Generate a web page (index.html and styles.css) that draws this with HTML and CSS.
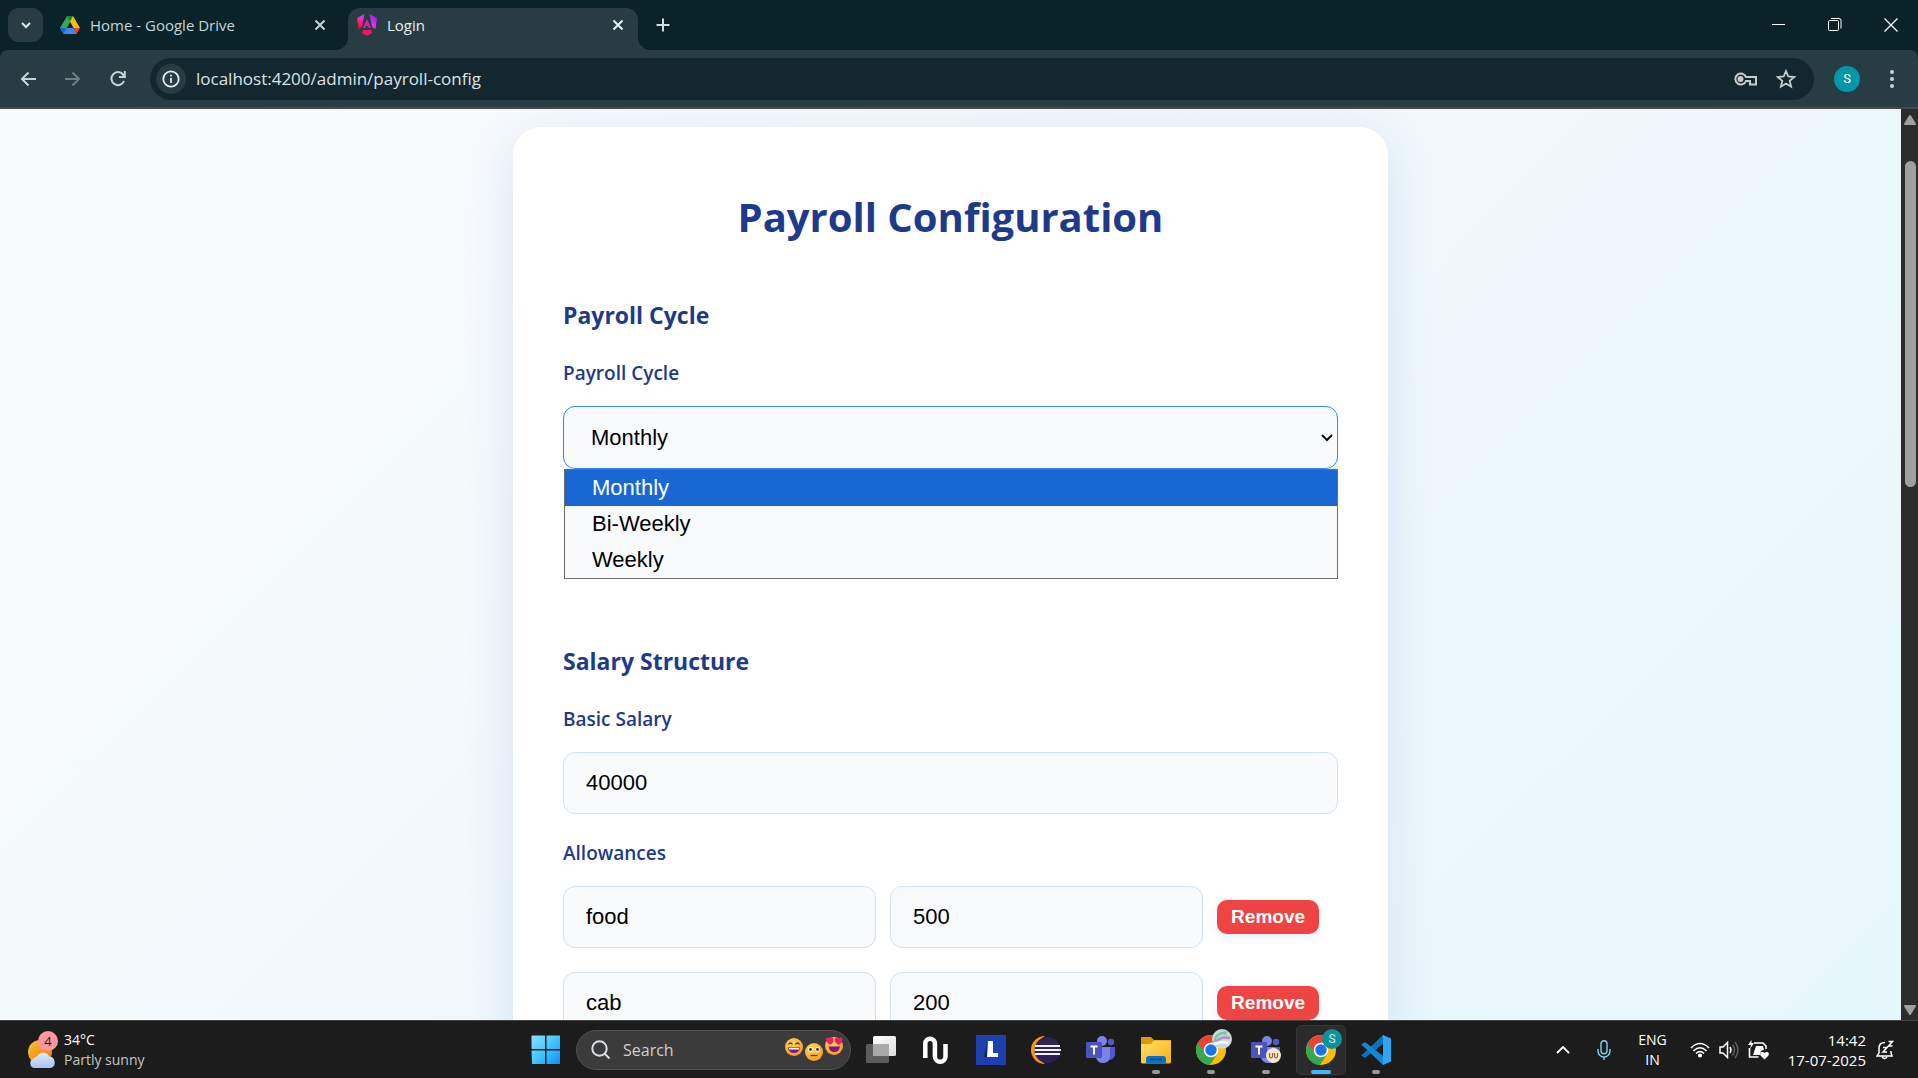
FILE: index.html
```html
<!DOCTYPE html>
<html lang="en">
<head>
<meta charset="utf-8">
<meta name="viewport" content="width=device-width, initial-scale=1">
<title>Login</title>
<link rel="stylesheet" href="styles.css">
</head>
<body>
<header class="browser">
  <div class="tabstrip">
    <button class="tab-search" aria-label="Search tabs"><svg width="14" height="14" viewBox="0 0 14 14"><path d="M3 5l4 4 4-4" fill="none" stroke="#dfe9eb" stroke-width="2"/></svg></button>
    <div class="tab">
      <svg class="favicon" width="20" height="18" viewBox="0 0 20 18"><path d="M7 0L0 12l3.500 6 6.800-12z" fill="#34a853"/><path d="M7 0h6l7 12h-6.500z" fill="#fbbc04"/><path d="M7 0h6L10 5.500z" fill="#188038"/><path d="M0 12h6.800L3.500 18z" fill="#1967d2"/><path d="M6.800 12h6.500l3.200 6h-13z" fill="#4285f4"/><path d="M13.300 12H20l-3.500 6z" fill="#ea4335"/></svg>
      <span class="tab-title">Home - Google Drive</span>
      <button class="plain tab-close" aria-label="Close tab"><svg width="12" height="12" viewBox="0 0 12 12"><path d="M1.500 1.500l9 9M10.500 1.500l-9 9" stroke="#c3d2d5" stroke-width="2"/></svg></button>
    </div>
    <div class="tab active">
      <svg class="favicon" width="20" height="22" viewBox="0 0 20 22"><defs><linearGradient id="ng" x1="0" y1="1" x2="1" y2="0"><stop offset="0" stop-color="#f0060b"/><stop offset=".5" stop-color="#e935d6"/><stop offset="1" stop-color="#7a1cff"/></linearGradient></defs><path d="M7.500 0L5 13 1.500 15 0 4zM12.500 0L15 13l3.500 2L20 4z" fill="url(#ng)"/><path d="M10 5l4 9h-2.300l-.7-2H9l-.7 2H6z" fill="#e51bab"/><path d="M6 16h8l1 3-5 3-5-3z" fill="#f7145e"/></svg>
      <span class="tab-title">Login</span>
      <button class="plain tab-close" aria-label="Close tab"><svg width="12" height="12" viewBox="0 0 12 12"><path d="M1.500 1.500l9 9M10.500 1.500l-9 9" stroke="#e6f0f2" stroke-width="2"/></svg></button>
    </div>
    <button class="plain new-tab" aria-label="New tab"><svg width="14" height="14" viewBox="0 0 14 14"><path d="M7 .5v13M.5 7h13" stroke="#d3e0e3" stroke-width="2"/></svg></button>
    <div class="window-buttons">
      <button class="plain" aria-label="Minimize"><svg width="14" height="14" viewBox="0 0 14 14"><path d="M0 6.500h13" stroke="#fff"/></svg></button>
      <button class="plain" aria-label="Restore"><svg width="14" height="14" viewBox="0 0 14 14" fill="none" stroke="#fff"><rect x=".5" y="2.500" width="10" height="10" rx="1"/><path d="M3 .5h8a2 2 0 0 1 2 2v8"/></svg></button>
      <button class="plain" aria-label="Close"><svg width="14" height="14" viewBox="0 0 14 14"><path d="M.5.500l13 13M13.500.500l-13 13" stroke="#fff" stroke-width="1.300"/></svg></button>
    </div>
  </div>
  <div class="toolbar">
    <button class="plain nav" aria-label="Back"><svg width="16" height="16" viewBox="0 0 16 16"><path d="M16 8H2M8.500 1.500L2 8l6.500 6.500" fill="none" stroke="#c3d7db" stroke-width="2"/></svg></button>
    <button class="plain nav" aria-label="Forward"><svg width="16" height="16" viewBox="0 0 16 16"><path d="M0 8h14M7.500 1.500L14 8l-6.500 6.500" fill="none" stroke="#6f8084" stroke-width="2"/></svg></button>
    <button class="plain nav" aria-label="Reload"><svg width="16" height="16" viewBox="0 0 16 16"><path d="M14 10A6.500 6.500 0 1 1 13 3.500L15 6" fill="none" stroke="#c3d7db" stroke-width="2"/><path d="M15.800 0v7H9V5h4.800V0z" fill="#c3d7db"/></svg></button>
    <div class="omnibox">
      <button class="site-info" aria-label="Site information"><svg width="18" height="18" viewBox="0 0 18 18"><circle cx="9" cy="9" r="7.700" fill="none" stroke="#e3eaec" stroke-width="1.800"/><path d="M9 8v5M9 4.800v1.800" stroke="#e3eaec" stroke-width="1.800"/></svg></button>
      <input class="address" type="text" aria-label="Address" value="localhost:4200/admin/payroll-config">
      <button class="plain" aria-label="Passwords"><svg width="24" height="14" viewBox="0 0 24 14" fill="none" stroke="#c7cdcf" stroke-width="2"><path d="M12 5A5.500 5.500 0 1 0 12 9h4v3.500h6V5z"/><circle cx="6.500" cy="7" r="2" fill="#c7cdcf"/></svg></button>
      <button class="plain" aria-label="Bookmark"><svg width="20" height="20" viewBox="0 0 20 20"><path d="M10 2l2.300 5.500 6 .5-4.600 3.900 1.400 5.800-5.100-3.100-5.100 3.100 1.400-5.800L1.700 8l6-.5z" fill="none" stroke="#c7cdcf" stroke-width="1.800"/></svg></button>
    </div>
    <button class="avatar" aria-label="Profile">S</button>
    <button class="plain menu" aria-label="Menu"><svg width="6" height="20" viewBox="0 0 6 20" fill="#c3d7db"><circle cx="3" cy="3" r="2"/><circle cx="3" cy="10" r="2"/><circle cx="3" cy="17" r="2"/></svg></button>
  </div>
</header>

<div class="viewport">
  <main class="page">
    <form class="card">
      <h1 class="title">Payroll Configuration</h1>
      <section class="section cycle">
        <h2 class="heading">Payroll Cycle</h2>
        <label class="label" for="cycle">Payroll Cycle</label>
        <div class="select-wrap">
          <select class="field select" id="cycle"><option selected>Monthly</option><option>Bi-Weekly</option><option>Weekly</option></select>
          <svg class="select-arrow" width="12" height="8" viewBox="0 0 12 8"><path d="M1 1l5 5 5-5" fill="none" stroke="#101010" stroke-width="2"/></svg>
          <div class="options" role="listbox" aria-label="Payroll Cycle">
            <div class="option selected" role="option" aria-selected="true">Monthly</div>
            <div class="option" role="option">Bi-Weekly</div>
            <div class="option" role="option">Weekly</div>
          </div>
        </div>
      </section>
      <section class="section">
        <h2 class="heading">Salary Structure</h2>
        <label class="label" for="basic">Basic Salary</label>
        <input class="field" id="basic" type="number" value="40000">
        <fieldset class="allowances">
          <legend class="label">Allowances</legend>
          <div class="allowance">
            <input class="field" type="text" aria-label="Allowance name" value="food">
            <input class="field" type="number" aria-label="Allowance amount" value="500">
            <button class="remove" type="button">Remove</button>
          </div>
          <div class="allowance">
            <input class="field" type="text" aria-label="Allowance name" value="cab">
            <input class="field" type="number" aria-label="Allowance amount" value="200">
            <button class="remove" type="button">Remove</button>
          </div>
        </fieldset>
      </section>
    </form>
  </main>
  <div class="scrollbar" aria-hidden="true">
    <svg width="12" height="10" viewBox="0 0 12 10"><path d="M6 1l5 8H1z" fill="#9f9f9f" stroke="#9f9f9f" stroke-width="2" stroke-linejoin="round"/></svg>
    <div class="track"><div class="thumb"></div></div>
    <svg width="12" height="10" viewBox="0 0 12 10"><path d="M6 9l5-8H1z" fill="#9f9f9f" stroke="#9f9f9f" stroke-width="2" stroke-linejoin="round"/></svg>
  </div>
</div>

<footer class="taskbar">
  <div class="weather">
    <svg width="32" height="40" viewBox="0 0 32 40"><defs><linearGradient id="sun" x1="0" y1="0" x2="1" y2="1"><stop offset="0" stop-color="#f8c22e"/><stop offset="1" stop-color="#f0710f"/></linearGradient><linearGradient id="cloud" x1="0" y1="0" x2="0" y2="1"><stop offset="0" stop-color="#dde9fc"/><stop offset="1" stop-color="#a9c3f3"/></linearGradient></defs><circle cx="13" cy="22" r="12" fill="url(#sun)"/><path d="M7 38a5 5 0 0 1-.5-9.500 4 4 0 0 1 3.500-2 7 7 0 0 1 12.500 0 6 6 0 0 1 1.500 11.500z" fill="url(#cloud)"/><circle cx="21" cy="11" r="10" fill="#fe97a1"/><text class="badge-count" x="21" y="16" text-anchor="middle">4</text></svg>
    <div class="two-line"><span>34°C</span><span class="muted">Partly sunny</span></div>
  </div>
  <nav class="apps" aria-label="Taskbar">
    <button class="app" aria-label="Start"><svg width="30" height="30" viewBox="0 0 30 30"><defs><linearGradient id="win" x1="0" y1="0" x2="1" y2="1"><stop offset="0" stop-color="#8be0ff"/><stop offset=".5" stop-color="#3fc8fd"/><stop offset="1" stop-color="#0b8ff7"/></linearGradient></defs><path d="M1 .5h13v13.500H.5V1zM15.500.500h13.500v13.500H15.500zM.5 15.500H14V29H1zM15.500 15.500h13.500V29H15.500z" fill="url(#win)"/></svg></button>
    <div class="search">
      <svg width="20" height="20" viewBox="0 0 20 20" fill="none" stroke="#d9dfe3" stroke-width="2"><circle cx="8.500" cy="8.500" r="7.200"/><path d="M13.500 13.500l5 5"/></svg>
      <input class="search-input" type="text" placeholder="Search" aria-label="Search">
      <svg width="60" height="26" viewBox="0 0 60 26"><defs><radialGradient id="face" cx=".4" cy=".3" r=".8"><stop offset="0" stop-color="#ffd650"/><stop offset="1" stop-color="#f6932a"/></radialGradient></defs><circle cx="10" cy="10" r="9" fill="url(#face)"/><path d="M4.500 7.500q2-3 4 0M11.500 7.500q2-3 4 0" fill="none" stroke="#573116" stroke-width="1.300"/><path d="M4 10.500h12q-1 5.500-6 5.500t-6-5.500z" fill="#7f1880"/><path d="M5 11h10v1.500H5z" fill="#fff"/><circle cx="30" cy="15" r="9" fill="url(#face)"/><circle cx="26.500" cy="12.500" r="2.400" fill="#fff"/><circle cx="33.500" cy="12.500" r="2.400" fill="#fff"/><circle cx="26.500" cy="12.500" r="1.400" fill="#402a20"/><circle cx="33.500" cy="12.500" r="1.400" fill="#402a20"/><path d="M26.500 18.500h7" stroke="#6a3a14" stroke-width="1.300"/><circle cx="50" cy="9" r="9" fill="url(#face)"/><path d="M46 7.800C42 5 41 2 42.500.800 44 0 46 .5 46 1.500 47 0 49 .5 49.500 2 50 4 48.500 6.500 46 7.800zM54.500 7.800C51 6 50 3 51 1.500 52.500 0 54 .5 54.500 1.500 56 0 58 .5 58.500 2 59 4 57 7 54.500 7.800z" fill="#ee1e63"/><path d="M44.500 9.500h11.500q-1 5.500-5.700 5.500t-5.800-5.500z" fill="#7f1880"/></svg>
    </div>
    <button class="app" aria-label="Task view"><svg width="30" height="30" viewBox="0 0 30 30"><defs><linearGradient id="tv" x1="0" y1="0" x2="1" y2="1"><stop offset="0" stop-color="#fff"/><stop offset="1" stop-color="#dcdcdc"/></linearGradient></defs><rect x="0" y="9" width="23" height="19" rx="1.500" fill="#5c5c5c"/><rect x="7" y="1" width="23" height="20" rx="1.500" fill="url(#tv)"/><path d="M7 9h16v12H7z" fill="#a9a9a9"/></svg></button>
    <button class="app" aria-label="N"><svg width="30" height="30" viewBox="0 0 30 30"><path d="M4.300 23V8.500a4.800 4.800 0 0 1 9.600 0v13a5.300 5.300 0 0 0 10.600 0V9" fill="none" stroke="#fff" stroke-width="4.500"/></svg></button>
    <button class="app" aria-label="L"><svg width="30" height="30" viewBox="0 0 30 30"><path d="M0 0h30v30H0z" fill="#1e3fb0"/><path d="M8 22l4-16v16z" fill="#082d50"/><path d="M12 6h5v12h5v4H11z" fill="#fff"/></svg></button>
    <button class="app" aria-label="Eclipse"><svg width="30" height="30" viewBox="0 0 30 30"><path d="M14 1A14 14 0 0 0 14 29 16 16 0 0 1 14 1z" fill="#f7941e"/><circle cx="16.500" cy="15" r="13" fill="#2c2255"/><path d="M4 11h25M3.500 15h26.500M4 19h25" stroke="#f4f2fa" stroke-width="2"/></svg></button>
    <button class="app" aria-label="Teams"><svg width="30" height="30" viewBox="0 0 30 30"><g id="teams"><circle cx="25" cy="7" r="3.200" fill="#5059c9"/><circle cx="16" cy="6" r="5" fill="#7b83eb"/><path d="M20 12h9v8q-1 5-7 5z" fill="#5059c9"/><path d="M10 12h14v9q0 7-7 7-5 0-7-5z" fill="#7b83eb"/><rect x="0" y="7" width="16" height="16" rx="1" fill="#4b53bc"/><path d="M4.500 11.500h7M8 11v8.500" stroke="#fff" stroke-width="2"/></g></svg></button>
    <button class="app running" aria-label="File Explorer"><svg width="30" height="30" viewBox="0 0 30 30"><defs><linearGradient id="folder" x1="0" y1="0" x2="1" y2="1"><stop offset="0" stop-color="#ffde6c"/><stop offset="1" stop-color="#f9b20d"/></linearGradient></defs><path d="M0 3q0-1 1-1h9l3 3h16q1 0 1 1v8H0z" fill="#dc9a09"/><path d="M0 9h10l3-3.500h17V27q0 1.500-1.500 1.500h-27Q0 28.500 0 27z" fill="url(#folder)"/><path d="M5 28.500V24q0-3 3-3h14q3 0 3 3v4.500z" fill="#0d6fc1"/><path d="M9 24.500h12" stroke="#0b4a86" stroke-width="1.500"/></svg></button>
    <button class="app running" aria-label="Chrome, first profile"><svg width="44" height="44" viewBox="-6 0 44 44"><g id="chrome"><circle cx="16" cy="22" r="15" fill="#fbbc04"/><path d="M3 14.500A15 15 0 0 0 15 37l7.500-11.500L16 22z" fill="#34a853"/><path d="M29 14.500H16l-6.500 11L3 14.500A15 15 0 0 1 29 14.500z" fill="#ea4335"/><circle cx="16" cy="22" r="7.300" fill="#fff"/><circle cx="16" cy="22" r="5.700" fill="#1a73e8"/></g><circle cx="27" cy="11" r="10" fill="#cfd6d7"/><path d="M19 14q2-10 13-10M21 10q5-7 11-3" fill="none" stroke="#7cc7a9" stroke-width="2"/><path d="M20 15q5-7 15-5" fill="none" stroke="#ae8fce" stroke-width="2.500"/><path d="M19 16q8-3 15-1" fill="none" stroke="#f5f5f5" stroke-width="3"/></svg></button>
    <button class="app running" aria-label="Teams, second profile"><svg width="30" height="30" viewBox="0 0 30 30"><use href="#teams"/><circle cx="22.500" cy="20.500" r="7.500" fill="#f6e6c8"/><path d="M18.500 18v3q0 2 1.500 2t1.500-2v-3M23.500 18v3q0 2 1.500 2t1.500-2v-3" fill="none" stroke="#806740" stroke-width="1.200"/></svg></button>
    <button class="app running current" aria-label="Chrome, S profile"><svg width="44" height="44" viewBox="-6 0 44 44"><use href="#chrome"/><circle cx="27" cy="11" r="10" fill="#0d919f"/><text class="profile-letter" x="27" y="15" text-anchor="middle">S</text></svg></button>
    <button class="app running" aria-label="Visual Studio Code"><svg width="30" height="30" viewBox="0 0 30 30"><path d="M22 0L2.500 18.500 0 20l3 2.500h1.500L22 9z" fill="#0a73bd"/><path d="M22 30L2.500 11.500 0 10l3-2.500h1.500L22 21z" fill="#1488d2"/><path d="M22 0l8 3.500v23L22 30q-1-2 0-3V3q-1-1 0-3z" fill="#2aa8f2"/></svg></button>
  </nav>
  <div class="tray">
    <button class="plain" aria-label="Hidden icons"><svg width="14" height="8" viewBox="0 0 14 8"><path d="M1 7l6-6 6 6" fill="none" stroke="#fff" stroke-width="1.800"/></svg></button>
    <button class="plain mic" aria-label="Microphone"><svg width="14" height="20" viewBox="0 0 14 20" fill="none" stroke="#7fd4ee" stroke-width="1.400"><rect x="4" y=".7" width="6" height="13" rx="3"/><path d="M1 9v2a6 6 0 0 0 12 0V9M7 17v3"/></svg></button>
    <div class="two-line language"><span>ENG</span><span>IN</span></div>
    <div class="status">
      <svg width="20" height="16" viewBox="0 0 20 16" fill="none" stroke="#fff" stroke-width="1.600"><path d="M1 6q9-9 18 0M3.500 9q6.500-6.500 13 0M6 11.500q4-4 8 0"/><circle cx="10" cy="13.500" r="1.300" fill="#fff"/></svg>
      <svg width="20" height="18" viewBox="0 0 20 18" fill="none" stroke="#fff" stroke-width="1.500"><path d="M1 6h3l4.500-4.500v15L4 12H1z"/><path d="M11 6q2 3 0 6"/><path d="M13.500 3.500q4 5.500 0 11M16 1q6 8 0 16" stroke="#606060"/></svg>
      <svg width="22" height="20" viewBox="0 0 22 20"><path d="M6 3h9l3 3v3M1.500 8v9h9" fill="none" stroke="#fff" stroke-width="1.600"/><path d="M3.500 0v3H6L2 9l1-4H0z" fill="#fff"/><path d="M8 6h7l1 4q-4 0-4 5H5z" fill="#fff"/><path d="M16.500 19.500l-4-4q-1-3 1-3.500t3 1q1-1.500 3-1t1 3.500z" fill="#fff"/></svg>
    </div>
    <div class="two-line clock"><span>14:42</span><span>17-07-2025</span></div>
    <button class="plain" aria-label="Notifications"><svg width="18" height="20" viewBox="0 0 18 20" fill="none" stroke="#fff" stroke-width="1.500"><path d="M9 2.500Q3 2.500 3 8v5l-2 3h15l-1-3v-2M6 17q2.500 3 5 0"/><path d="M7 7.500h4l-4 4.500h4M12.500 1.500h4l-4 4.500h4"/></svg></button>
  </div>
</footer>
</body>
</html>
```
FILE: styles.css
```css
*,
*::before,
*::after { box-sizing: border-box; }

body {
  margin: 0;
  height: 100vh;
  display: flex;
  flex-direction: column;
  overflow: hidden;
  background: #0a2328;
  font-family: "Open Sans", "Noto Sans", sans-serif;
}

button, input, select { font-family: inherit; margin: 0; }
svg { display: block; flex: none; }

.plain {
  display: flex;
  align-items: center;
  justify-content: center;
  padding: 0;
  border: 0;
  background: none;
}

/* Browser frame */
.tabstrip {
  display: flex;
  align-items: center;
  height: 50px;
  padding-left: 8px;
}
.tab-search {
  display: flex;
  align-items: center;
  justify-content: center;
  width: 35px;
  height: 34px;
  padding: 0;
  border: 0;
  border-radius: 11px;
  background: #283d43;
}
.tab {
  display: flex;
  align-items: center;
  align-self: flex-end;
  gap: 10px;
  width: 290px;
  height: 42px;
  padding: 0 7px 8px 17px;
  color: #c3d7db;
  font-size: 15px;
}
.tab.active {
  position: relative;
  margin-left: 15px;
  padding: 0 14px 8px 9px;
  border-radius: 12px 12px 0 0;
  background: #283d43;
  color: #e6f0f2;
}
.tab.active::before,
.tab.active::after {
  content: "";
  position: absolute;
  bottom: 0;
  width: 12px;
  height: 12px;
}
.tab.active::before {
  right: 100%;
  background: radial-gradient(circle at 0 0, transparent 12px, #283d43 12px);
}
.tab.active::after {
  left: 100%;
  background: radial-gradient(circle at 100% 0, transparent 12px, #283d43 12px);
}
.tab-title { flex: 1; }
.new-tab { margin-left: 18px; }
.window-buttons {
  display: flex;
  gap: 42px;
  margin-left: auto;
  padding-right: 20px;
}

.toolbar {
  display: flex;
  align-items: center;
  height: 59px;
  padding: 0 20px 0 5px;
  border-bottom: 2px solid #46494b;
  border-radius: 8px 8px 0 0;
  background: #283d43;
}
.nav { width: 45px; height: 40px; }
.omnibox {
  display: flex;
  align-items: center;
  flex: 1;
  gap: 18px;
  height: 42px;
  margin-left: 10px;
  padding: 0 18px 0 6px;
  border-radius: 21px;
  background: #12282e;
}
.site-info {
  display: flex;
  align-items: center;
  justify-content: center;
  width: 30px;
  height: 30px;
  padding: 0;
  border: 0;
  border-radius: 50%;
  background: #283d43;
}
.address {
  flex: 1;
  min-width: 0;
  margin-left: -8px;
  padding: 0;
  border: 0;
  background: none;
  color: #dce3e5;
  font-size: 17px;
}
.avatar {
  width: 26px;
  height: 26px;
  margin: 0 26px 0 20px;
  padding: 0;
  border: 0;
  border-radius: 50%;
  background: #0097a7;
  color: #fff;
  font-family: Roboto, sans-serif;
  font-size: 13px;
}
.menu { width: 12px; }

/* Page */
.viewport {
  display: flex;
  flex: 1;
  min-height: 0;
}
.page {
  flex: 1;
  overflow: hidden;
  padding: 18px 24px 0;
  background: linear-gradient(135deg, #fafbfd, #f0f8fb 50%, #e6f7fc);
}
.card {
  max-width: 875px;
  min-height: 1200px;
  margin: 0 auto;
  padding: 58px 50px;
  border-radius: 28px;
  background: #fff;
  box-shadow: 0 10px 50px rgba(30, 80, 180, 0.12);
  color: #1e3a8a;
}
.title {
  margin: 0 0 50px;
  font-size: 40px;
  line-height: 64px;
  text-align: center;
}
.heading {
  margin: 0 0 29px;
  font-size: 23px;
  line-height: 32px;
}
.label {
  display: block;
  margin: 0 0 20px;
  padding: 0;
  font-size: 19px;
  font-weight: 600;
  line-height: 26px;
}
.cycle { padding-bottom: 176px; }
.select-wrap { position: relative; }
.field {
  display: block;
  width: 100%;
  height: 62px;
  padding: 0 22px;
  border: 1px solid #cfe2f8;
  border-radius: 12px;
  background: #f8fafc;
  color: #000;
  font-family: "Liberation Sans", Arial, sans-serif;
  font-size: 22px;
}
.select {
  appearance: none;
  height: 63px;
  padding: 0 27px;
  border-color: #3b82f6;
}
.select-arrow {
  position: absolute;
  top: 28px;
  right: 5px;
}
.options {
  position: absolute;
  top: 100%;
  left: 1px;
  right: 0;
  border: 1px solid #6b6b6b;
  background: #f8fafc;
  color: #000;
  font-family: "Liberation Sans", Arial, sans-serif;
  font-size: 22px;
  line-height: 36px;
}
.option { padding: 0 27px; }
.option.selected { background: #1967d2; color: #fff; }
.allowances {
  margin: 26px 0 0;
  padding: 0;
  border: 0;
}
.allowance {
  display: flex;
  align-items: center;
  gap: 14px;
  margin-bottom: 24px;
  padding-right: 19px;
}
.allowance .field { flex: 1; min-width: 0; }
.remove {
  padding: 0 14px;
  border: 0;
  border-radius: 10px;
  background: #ef4444;
  box-shadow: 0 3px 10px rgba(30, 80, 180, 0.1);
  color: #fff;
  font-family: "Liberation Sans", Arial, sans-serif;
  font-size: 19px;
  font-weight: 700;
  line-height: 34px;
}

.scrollbar {
  display: flex;
  flex-direction: column;
  align-items: center;
  width: 17px;
  padding: 6px 0 5px 1px;
  background: #2c2c2c;
}
.track { flex: 1; padding-top: 36px; }
.thumb {
  width: 11px;
  height: 38%;
  min-height: 326px;
  border-radius: 6px;
  background: #9f9f9f;
}

/* Taskbar */
.taskbar {
  display: grid;
  grid-template-columns: 1fr auto 1fr;
  align-items: center;
  height: 58px;
  border-top: 1px solid #444;
  background: #1c1c1c;
  color: #fff;
}
.weather {
  display: flex;
  align-items: center;
  gap: 5px;
  padding-left: 27px;
}
.two-line {
  display: flex;
  flex-direction: column;
  font-size: 14px;
  line-height: 20px;
}
.muted { color: #c5c5c5; }
.badge-count { font-size: 13px; fill: #1c1c1c; }
.apps {
  display: flex;
  align-items: center;
  gap: 5px;
  padding-left: 4px;
}
.app {
  position: relative;
  display: flex;
  align-items: center;
  justify-content: center;
  width: 50px;
  height: 50px;
  padding: 0;
  border: 1px solid transparent;
  border-radius: 5px;
  background: none;
}
.running::after {
  content: "";
  position: absolute;
  bottom: 0;
  width: 8px;
  height: 4px;
  border-radius: 2px;
  background: #9a9a9a;
}
.current { border-color: #373737; background: #2b2b2b; }
.current::after { width: 20px; background: #42b6fa; }
.profile-letter {
  font-family: Roboto, sans-serif;
  font-size: 12px;
  fill: #cfeef1;
}
.search {
  display: flex;
  align-items: center;
  width: 275px;
  height: 40px;
  padding: 0 6px 0 14px;
  gap: 12px;
  border: 1px solid #505050;
  border-radius: 20px;
  background: #3b3b3b;
}
.search-input {
  flex: 1;
  min-width: 0;
  padding: 0;
  border: 0;
  background: none;
  font-size: 16px;
}
.search-input::placeholder { color: #cfcfcf; }
.tray {
  display: flex;
  align-items: center;
  justify-content: flex-end;
  padding-right: 24px;
}
.mic { margin: 0 27px; }
.language { align-items: center; }
.status { display: flex; align-items: center; gap: 9px; margin: 0 18px 0 23px; }
.clock { align-items: flex-end; margin-right: 10px; font-size: 15px; }
```
